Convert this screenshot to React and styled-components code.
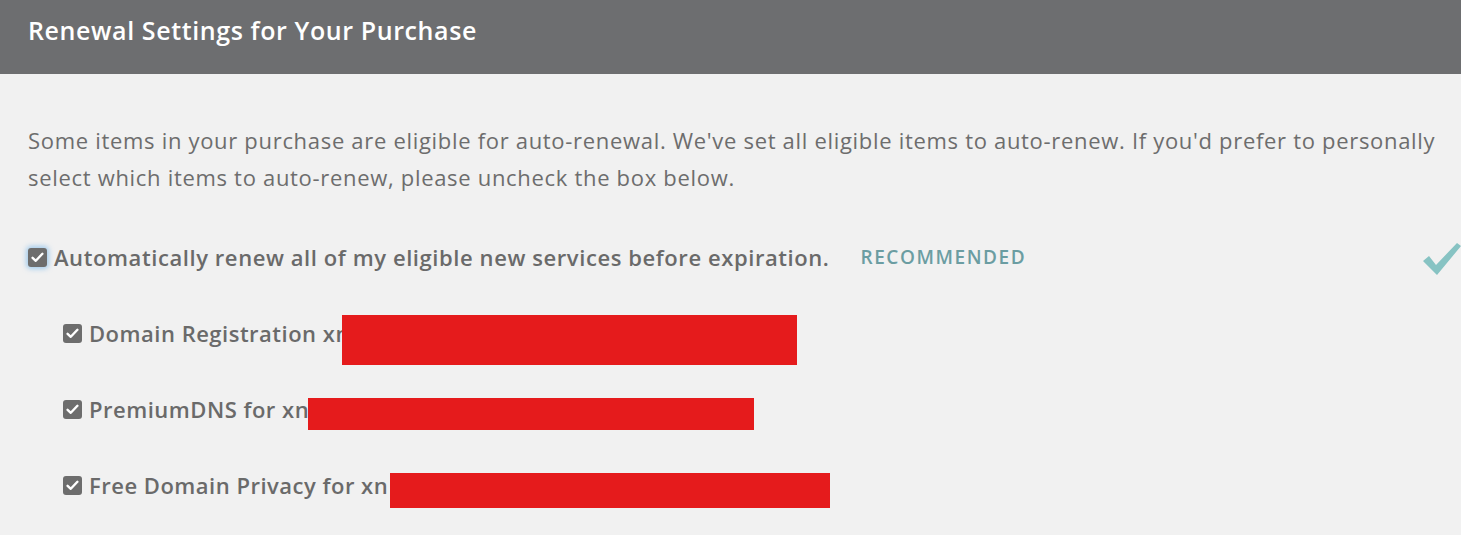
import React from "react";
import styled, { createGlobalStyle } from "styled-components";

const Global = createGlobalStyle`
  html, body { margin: 0; padding: 0; background: #f1f1f1; }
  body { font-family: "Open Sans", Lato, "Liberation Sans", sans-serif; }
`;

const Panel = styled.div`
  width: 1461px;
  height: 535px;
  background: #f1f1f1;
  overflow: hidden;
`;

const Header = styled.div`
  height: 74px;
  background: #6d6e70;
  box-sizing: border-box;
  padding: 14px 28px 0;
`;

const Title = styled.h2`
  margin: 0;
  color: #ffffff;
  font-size: 25px;
  font-weight: 600;
  letter-spacing: 0.6px;
  line-height: 32px;
`;

const Body = styled.div`
  padding: 48px 28px 0;
`;

const Intro = styled.p`
  margin: 0 -20px 0 0;
  color: #6d6d6d;
  font-size: 22px;
  font-weight: 400;
  letter-spacing: 0.69px;
  line-height: 37px;
`;

const MainRow = styled.div`
  display: flex;
  align-items: center;
  margin-top: 43px;
  height: 36px;
`;

const Box = styled.span`
  flex: none;
  width: 19px;
  height: 19px;
  border-radius: 3px;
  background: #6d6d6d;
  display: inline-flex;
  align-items: center;
  justify-content: center;
  margin-right: 7px;
  box-shadow: ${(p) => (p.$focus ? "0 0 5px 2px rgba(102,175,233,0.55)" : "none")};
`;

const MainLabel = styled.span`
  color: #6a6a6a;
  font-size: 22px;
  font-weight: 600;
  letter-spacing: 0.58px;
`;

const Recommended = styled.span`
  margin-left: 31px;
  color: #6b9da2;
  font-size: 19px;
  font-weight: 600;
  letter-spacing: 1.55px;
`;

const BigCheck = styled.svg`
  margin-left: auto;
  margin-right: -28px;
  margin-top: 4px;
`;

const SubList = styled.div`
  display: flex;
  flex-direction: column;
  padding-left: 35px;
  margin-top: 40px;
  gap: 40px;
`;

const SubRow = styled.div`
  display: flex;
  align-items: center;
  height: 36px;
`;

const SubLabel = styled.span`
  color: #6a6a6a;
  font-size: 22px;
  font-weight: 600;
  letter-spacing: 0.5px;
  white-space: nowrap;
`;

const Redact = styled.span`
  flex: none;
  align-self: flex-start;
  display: inline-block;
  background: #e51b1c;
  height: ${(p) => p.$h}px;
  width: ${(p) => p.$w}px;
  margin-left: ${(p) => p.$ml}px;
  margin-top: ${(p) => p.$mt}px;
`;

const Tick = () => (
  <svg width="13" height="11" viewBox="0 0 13 11">
    <path d="M1.6 5.8 L4.8 8.8 L11.4 1.8" fill="none" stroke="#fff" strokeWidth="2.4" strokeLinecap="round" strokeLinejoin="round" />
  </svg>
);

const items = [
  { label: "Domain Registration xn", w: 455, h: 50, ml: -8, mt: 0 },
  { label: "PremiumDNS for xn", w: 446, h: 32, ml: -1, mt: 7 },
  { label: "Free Domain Privacy for xn", w: 440, h: 35, ml: 2, mt: 6 },
];

export default function App() {
  return (
    <>
      <Global />
      <Panel>
        <Header>
          <Title>Renewal Settings for Your Purchase</Title>
        </Header>
        <Body>
          <Intro>
            Some items in your purchase are eligible for auto-renewal. We've set all eligible items to auto-renew. If you'd prefer to personally select which items to auto-renew, please uncheck the box below.
          </Intro>
          <MainRow>
            <Box $focus><Tick /></Box>
            <MainLabel>Automatically renew all of my eligible new services before expiration.</MainLabel>
            <Recommended>RECOMMENDED</Recommended>
            <BigCheck width="38" height="33" viewBox="0 0 38 33">
              <path d="M0 18 L6 13 L13 22 L34 0 L38 3 L14 32 Z" fill="#87c3c3" />
            </BigCheck>
          </MainRow>
          <SubList>
            {items.map((it) => (
              <SubRow key={it.label}>
                <Box><Tick /></Box>
                <SubLabel>{it.label}</SubLabel>
                <Redact $w={it.w} $h={it.h} $ml={it.ml} $mt={it.mt} />
              </SubRow>
            ))}
          </SubList>
        </Body>
      </Panel>
    </>
  );
}
